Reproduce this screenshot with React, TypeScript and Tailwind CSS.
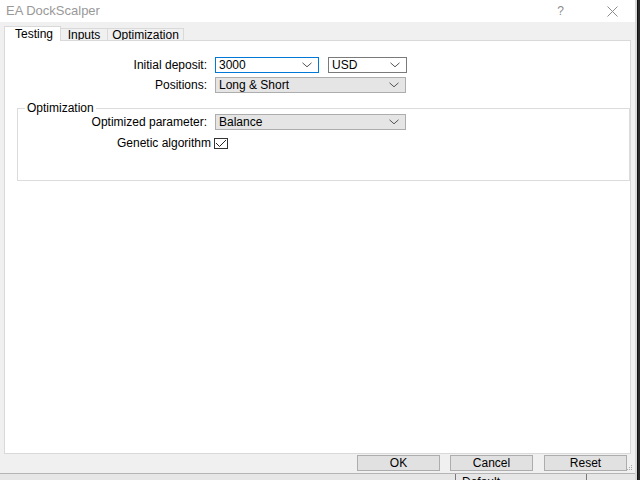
import React from "react";

const Chevron = () => (
  <svg width="10" height="6" viewBox="0 0 10 6" className="shrink-0">
    <polyline points="0.5,0.8 5,4.8 9.5,0.8" fill="none" stroke="#555" strokeWidth="1" />
  </svg>
);

const Combo = ({ value, w, tone }: { value: string; w: string; tone: "gray" | "white" | "focus" }) => {
  const cls =
    tone === "gray"
      ? "bg-[#e5e5e5] border-[#adadad]"
      : tone === "focus"
      ? "bg-white border-[#0078d7]"
      : "bg-white border-[#7a7a7a]";
  return (
    <div className={`${w} h-[16px] border ${cls} flex items-center justify-between pl-[3px] pr-[6px] text-[12px] leading-[14px] text-black`}>
      <span>{value}</span>
      <Chevron />
    </div>
  );
};

export default function App() {
  return (
    <div className="w-[640px] h-[480px] flex overflow-hidden bg-[#1c1c1c]" style={{ fontFamily: '"Liberation Sans", Arial, sans-serif' }}>
      <div className="w-[635px] shrink-0 flex flex-col">
        {/* window */}
        <div className="relative h-[473px] shrink-0 flex flex-col bg-[#f0f0f0]">
          {/* title bar */}
          <div className="h-[22px] shrink-0 bg-white flex items-center pl-[6px] text-[13px] text-[#999999]">
            <span className="flex-1">EA DockScalper</span>
            <span className="text-[12px] text-[#8c8c8c]">?</span>
            <svg width="11" height="11" viewBox="0 0 11 11" className="ml-[43px] mr-[17px]">
              <line x1="0.5" y1="0.5" x2="10.5" y2="10.5" stroke="#8c8c8c" strokeWidth="1" />
              <line x1="10.5" y1="0.5" x2="0.5" y2="10.5" stroke="#8c8c8c" strokeWidth="1" />
            </svg>
          </div>
          {/* body */}
          <div className="flex flex-col pt-[4px] pl-[4px] pr-[4px]">
            {/* tabs */}
            <div className="h-[14px] shrink-0 flex items-end text-[12px] text-black">
              <div className="relative z-10 -mb-px w-[57px] h-[15px] bg-white border-l border-t border-r border-[#d9d9d9] flex items-center pl-[10px] leading-[13px]">
                Testing
              </div>
              <div className="w-[47px] h-[12px] border-t border-r border-[#d9d9d9] flex items-center justify-center leading-[11px] pt-[1px]">
                Inputs
              </div>
              <div className="w-[76px] h-[12px] border-t border-r border-[#d9d9d9] flex items-center justify-center leading-[11px] pt-[1px]">
                Optimization
              </div>
            </div>
            {/* panel */}
            <div className="h-[414px] shrink-0 bg-white border border-[#d9d9d9] flex flex-col text-[12px] leading-[14px] text-black">
              <div className="mt-[16px] flex items-center">
                <div className="w-[202px] text-right">Initial deposit:</div>
                <div className="ml-[8px]">
                  <Combo value="3000" w="w-[104px]" tone="focus" />
                </div>
                <div className="ml-[9px]">
                  <Combo value="USD" w="w-[79px]" tone="white" />
                </div>
              </div>
              <div className="mt-[4px] flex items-center">
                <div className="w-[202px] text-right">Positions:</div>
                <div className="ml-[8px]">
                  <Combo value="Long & Short" w="w-[191px]" tone="gray" />
                </div>
              </div>
              <fieldset className="mt-[9px] ml-[12px] border border-[#dcdcdc] pl-[7px] pb-[30px]">
                <legend className="px-[2px] leading-[12px]">Optimization</legend>
                <div className="flex items-center">
                  <div className="w-[182px] text-right">Optimized parameter:</div>
                  <div className="ml-[8px]">
                    <Combo value="Balance" w="w-[191px]" tone="gray" />
                  </div>
                </div>
                <div className="mt-[6px] flex items-center">
                  <div className="w-[186px] text-right">Genetic algorithm</div>
                  <div className="ml-[3px] w-[14px] h-[11px] border border-[#333333] flex items-center justify-center">
                    <svg width="12" height="9" viewBox="0 0 12 9">
                      <polyline points="1,4 4.5,7.5 11,1" fill="none" stroke="#222" strokeWidth="1" />
                    </svg>
                  </div>
                </div>
              </fieldset>
            </div>
            {/* buttons */}
            <div className="mt-[1px] shrink-0 flex justify-end pr-[4px] text-[12px] text-black">
              <div className="w-[83px] h-[16px] bg-[#e1e1e1] border border-[#adadad] flex items-center justify-center leading-[14px]">OK</div>
              <div className="ml-[10px] w-[83px] h-[16px] bg-[#e1e1e1] border border-[#adadad] flex items-center justify-center leading-[14px]">Cancel</div>
              <div className="ml-[11px] w-[83px] h-[16px] bg-[#e1e1e1] border border-[#adadad] flex items-center justify-center leading-[14px]">Reset</div>
            </div>
          </div>
          {/* size grip */}
          <svg width="6" height="6" viewBox="0 0 6 6" className="absolute right-[2px] bottom-[2px]">
            <rect x="4" y="0" width="1" height="1" fill="#aaa" />
            <rect x="2" y="2" width="1" height="1" fill="#aaa" />
            <rect x="4" y="2" width="1" height="1" fill="#aaa" />
            <rect x="0" y="4" width="1" height="1" fill="#aaa" />
            <rect x="2" y="4" width="1" height="1" fill="#aaa" />
            <rect x="4" y="4" width="1" height="1" fill="#aaa" />
          </svg>
        </div>
        {/* background peeking below */}
        <div className="flex-1 flex bg-[#e6e6e6] border-t border-[#b5b5b5] overflow-hidden">
          <div className="w-[455px]" />
          <div className="w-[132px] border-l border-r border-[#7a7a7a] pl-[6px] text-[12px] leading-[12px] text-black pt-[2px]">Default</div>
        </div>
      </div>
      <div className="w-[5px] flex">
        <div className="w-[2px] bg-[#d8d8d8]" />
        <div className="w-[1px] bg-[#111]" />
        <div className="flex-1 bg-[#2a2a2a]" />
      </div>
    </div>
  );
}
